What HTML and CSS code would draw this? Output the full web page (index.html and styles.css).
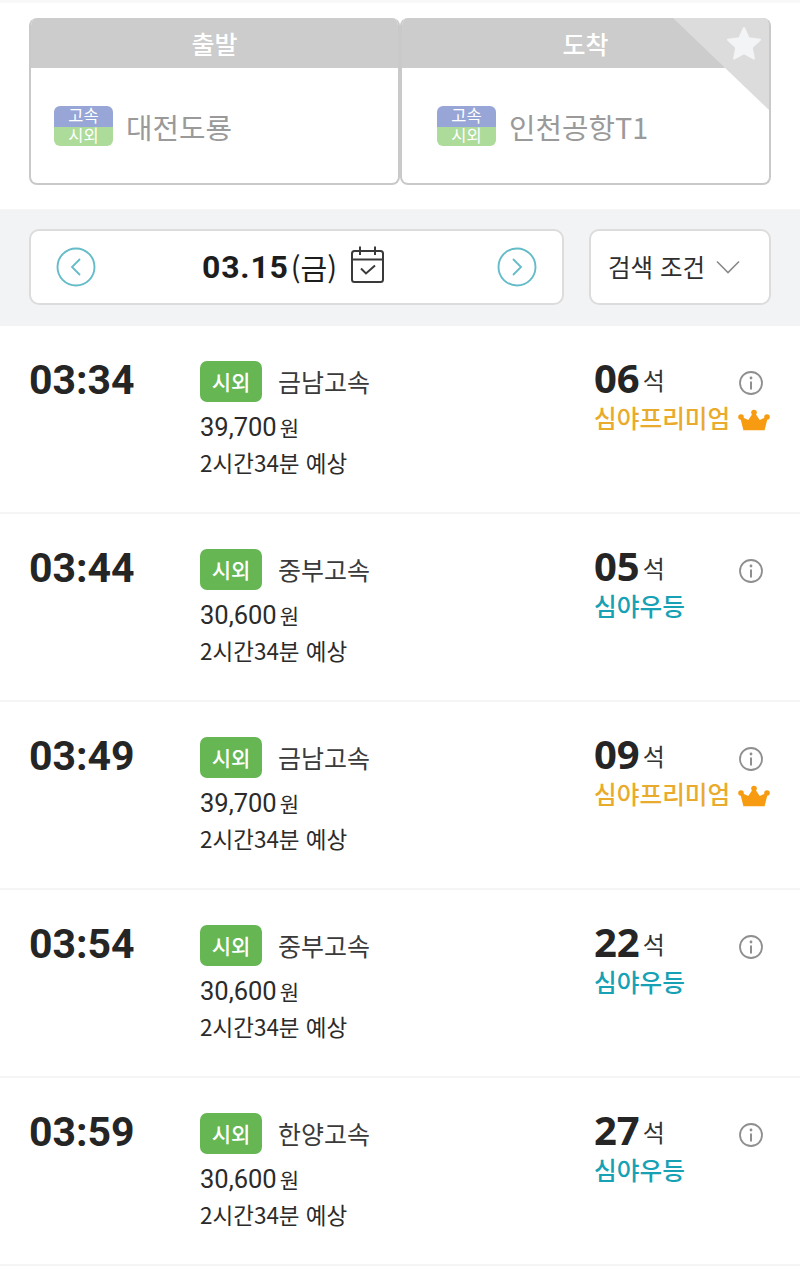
FILE: index.html
```html
<!DOCTYPE html>
<html lang="ko">
<head>
<meta charset="utf-8">
<title>배차 조회</title>
<link rel="stylesheet" href="styles.css">
</head>
<body>
<header class="route">
  <section class="end">
    <h2 class="end-title">출발</h2>
    <div class="end-body">
      <span class="kind"><span class="kind-a">고속</span><span class="kind-b">시외</span></span>
      <span class="place">대전도룡</span>
    </div>
  </section>
  <section class="end end-right">
    <h2 class="end-title">도착</h2>
    <div class="end-body">
      <span class="kind"><span class="kind-a">고속</span><span class="kind-b">시외</span></span>
      <span class="place">인천공항T1</span>
    </div>
    <svg class="fav" width="98" height="94" viewBox="0 0 98 94"><path d="M0 0H91a7 7 0 0 1 7 7V94Z" fill="#dcdcdc"/><path d="M71 10l4.800 10.300 11.200 1.400-8.300 7.700 2.200 11.100L71 35.100l-9.900 5.400 2.200-11.100-8.300-7.700 11.200-1.400Z" fill="#f3f4f6" stroke="#f3f4f6" stroke-width="2" stroke-linejoin="round"/></svg>
  </section>
</header>

<div class="bar">
  <div class="date-box">
    <svg class="arrow" width="40" height="40" viewBox="0 0 40 40"><circle cx="20" cy="20" r="18.500" fill="none" stroke="#64bcc8" stroke-width="1.900"/><path d="M24 12l-8 8 8 8" fill="none" stroke="#64bcc8" stroke-width="1.800"/></svg>
    <div class="date">
      <span class="date-num">03.15</span><span class="date-day">(금)</span>
      <svg class="cal" width="36" height="40" viewBox="0 0 36 40"><rect x="2" y="6" width="31" height="31" rx="2.500" fill="none" stroke="#3a3a3a" stroke-width="2"/><path d="M2 14.500H33M10 1.500V10M25 1.500V10" fill="none" stroke="#3a3a3a" stroke-width="2"/><path d="M11 23.500l5 5 9-8" fill="none" stroke="#3a3a3a" stroke-width="2"/></svg>
    </div>
    <svg class="arrow" width="40" height="40" viewBox="0 0 40 40"><circle cx="20" cy="20" r="18.500" fill="none" stroke="#64bcc8" stroke-width="1.900"/><path d="M16 12l8 8-8 8" fill="none" stroke="#64bcc8" stroke-width="1.800"/></svg>
  </div>
  <div class="filter">
    <span>검색 조건</span>
    <svg width="24" height="14" viewBox="0 0 24 14"><path d="M1 1.500l11 11 11-11" fill="none" stroke="#8a8a8a" stroke-width="1.600"/></svg>
  </div>
</div>

<main class="list">
  <article class="row">
    <div class="time">03:34</div>
    <div class="info">
      <div class="line-top"><span class="tag">시외</span><span class="company">금남고속</span></div>
      <div class="price"><span class="amount">39,700</span><span class="won">원</span></div>
      <div class="dur">2시간34분 예상</div>
    </div>
    <div class="side">
      <div class="seats"><span class="seat-num">06</span><span class="seat-unit">석</span>
        <svg class="info-ico" width="26" height="26" viewBox="0 0 26 26"><circle cx="13" cy="13" r="11" fill="none" stroke="#8f8f8f" stroke-width="1.800"/><circle cx="13" cy="8" r="1.400" fill="#8f8f8f"/><path d="M13 11.500V19.500" stroke="#8f8f8f" stroke-width="2"/></svg>
      </div>
      <div class="grade premium">심야프리미엄<svg class="crown" width="32" height="24" viewBox="0 0 32 24"><path d="M6 21.500h20l3-12-7.500 3.500L16 5l-5.500 8L3 9.500Z" fill="#f79c12" stroke="#f79c12" stroke-width="1.500" stroke-linejoin="round"/><circle cx="16" cy="4.500" r="2.800" fill="#f79c12"/><circle cx="3" cy="9" r="2.800" fill="#f79c12"/><circle cx="29" cy="9" r="2.800" fill="#f79c12"/></svg></div>
    </div>
  </article>

  <article class="row">
    <div class="time">03:44</div>
    <div class="info">
      <div class="line-top"><span class="tag">시외</span><span class="company">중부고속</span></div>
      <div class="price"><span class="amount">30,600</span><span class="won">원</span></div>
      <div class="dur">2시간34분 예상</div>
    </div>
    <div class="side">
      <div class="seats"><span class="seat-num">05</span><span class="seat-unit">석</span>
        <svg class="info-ico" width="26" height="26" viewBox="0 0 26 26"><circle cx="13" cy="13" r="11" fill="none" stroke="#8f8f8f" stroke-width="1.800"/><circle cx="13" cy="8" r="1.400" fill="#8f8f8f"/><path d="M13 11.500V19.500" stroke="#8f8f8f" stroke-width="2"/></svg>
      </div>
      <div class="grade night">심야우등</div>
    </div>
  </article>

  <article class="row">
    <div class="time">03:49</div>
    <div class="info">
      <div class="line-top"><span class="tag">시외</span><span class="company">금남고속</span></div>
      <div class="price"><span class="amount">39,700</span><span class="won">원</span></div>
      <div class="dur">2시간34분 예상</div>
    </div>
    <div class="side">
      <div class="seats"><span class="seat-num">09</span><span class="seat-unit">석</span>
        <svg class="info-ico" width="26" height="26" viewBox="0 0 26 26"><circle cx="13" cy="13" r="11" fill="none" stroke="#8f8f8f" stroke-width="1.800"/><circle cx="13" cy="8" r="1.400" fill="#8f8f8f"/><path d="M13 11.500V19.500" stroke="#8f8f8f" stroke-width="2"/></svg>
      </div>
      <div class="grade premium">심야프리미엄<svg class="crown" width="32" height="24" viewBox="0 0 32 24"><path d="M6 21.500h20l3-12-7.500 3.500L16 5l-5.500 8L3 9.500Z" fill="#f79c12" stroke="#f79c12" stroke-width="1.500" stroke-linejoin="round"/><circle cx="16" cy="4.500" r="2.800" fill="#f79c12"/><circle cx="3" cy="9" r="2.800" fill="#f79c12"/><circle cx="29" cy="9" r="2.800" fill="#f79c12"/></svg></div>
    </div>
  </article>

  <article class="row">
    <div class="time">03:54</div>
    <div class="info">
      <div class="line-top"><span class="tag">시외</span><span class="company">중부고속</span></div>
      <div class="price"><span class="amount">30,600</span><span class="won">원</span></div>
      <div class="dur">2시간34분 예상</div>
    </div>
    <div class="side">
      <div class="seats"><span class="seat-num">22</span><span class="seat-unit">석</span>
        <svg class="info-ico" width="26" height="26" viewBox="0 0 26 26"><circle cx="13" cy="13" r="11" fill="none" stroke="#8f8f8f" stroke-width="1.800"/><circle cx="13" cy="8" r="1.400" fill="#8f8f8f"/><path d="M13 11.500V19.500" stroke="#8f8f8f" stroke-width="2"/></svg>
      </div>
      <div class="grade night">심야우등</div>
    </div>
  </article>

  <article class="row">
    <div class="time">03:59</div>
    <div class="info">
      <div class="line-top"><span class="tag">시외</span><span class="company">한양고속</span></div>
      <div class="price"><span class="amount">30,600</span><span class="won">원</span></div>
      <div class="dur">2시간34분 예상</div>
    </div>
    <div class="side">
      <div class="seats"><span class="seat-num">27</span><span class="seat-unit">석</span>
        <svg class="info-ico" width="26" height="26" viewBox="0 0 26 26"><circle cx="13" cy="13" r="11" fill="none" stroke="#8f8f8f" stroke-width="1.800"/><circle cx="13" cy="8" r="1.400" fill="#8f8f8f"/><path d="M13 11.500V19.500" stroke="#8f8f8f" stroke-width="2"/></svg>
      </div>
      <div class="grade night">심야우등</div>
    </div>
  </article>
</main>
</body>
</html>
```

FILE: styles.css
```css
* { box-sizing: border-box; }
html, body { margin: 0; padding: 0; }
body {
  width: 800px;
  height: 1270px;
  overflow: hidden;
  background: #fff;
  font-family: Roboto, "Noto Sans CJK KR", sans-serif;
  color: #2b2b2b;
}
.route {
  display: flex;
  height: 210px;
  padding: 15px 29px 25px;
  border-top: 3px solid #f8f8f8;
  border-bottom: 1px solid #f5f5f5;
}
.end {
  position: relative;
  width: 371px;
  height: 167px;
  border: 2px solid #c9c9c9;
  border-top: 0;
  border-radius: 8px;
  overflow: hidden;
  background: #fff;
}
.end-title {
  margin: 0 -2px;
  height: 50px;
  background: #ccc;
  color: #fff;
  font: 500 25px/50px "Noto Sans CJK KR", sans-serif;
  text-align: center;
}
.end-body {
  display: flex;
  align-items: flex-start;
  gap: 13px;
  padding: 38px 0 0 23px;
}
.end-right .end-body { padding-left: 35px; }
.kind {
  display: flex;
  flex-direction: column;
  width: 59px;
  height: 40px;
  border-radius: 6px;
  overflow: hidden;
  color: #fff;
  font: 400 16.500px/19px Roboto, "Noto Sans CJK KR", sans-serif;
  text-align: center;
}
.kind-a { height: 21px; padding-top: 1px; background: #97a6d6; }
.kind-b { height: 19px; background: #addb9a; }
.place {
  margin-top: 1px;
  color: #9a9a9a;
  font: 400 28.800px/40px "Noto Sans CJK KR", sans-serif;
}
.fav { position: absolute; top: 0; right: -2px; }
.bar {
  display: flex;
  justify-content: space-between;
  height: 116px;
  padding: 19px 29px 21px;
  background: #f2f3f5;
}
.date-box, .filter {
  display: flex;
  align-items: center;
  height: 76px;
  background: #fff;
  border: 2px solid #dcdcdc;
  border-radius: 10px;
}
.date-box {
  width: 535px;
  justify-content: space-between;
  padding: 0 25px;
}
.date {
  display: flex;
  align-items: center;
  margin-right: 5px;
  color: #1d1d1d;
}
.date-num { font: 700 32px/40px Roboto, sans-serif; letter-spacing: .8px; }
.date-day { margin-left: 2px; font: 400 29px/40px "Noto Sans CJK KR", sans-serif; }
.cal { margin: -4px 0 0 13px; }
.filter {
  width: 182px;
  gap: 11px;
  padding-left: 17px;
  font: 400 24.500px/36px "Noto Sans CJK KR", sans-serif;
  color: #2e2e2e;
}
.row {
  display: flex;
  height: 188px;
  padding: 28px 29px 0;
  border-bottom: 2px solid #f5f5f5;
}
.time {
  width: 171px;
  margin-top: 2px;
  color: #252525;
  font: 700 41px/48px Roboto, sans-serif;
}
.info { width: 394px; padding-top: 7px; }
.line-top { display: flex; align-items: center; gap: 16px; }
.tag {
  width: 62px;
  height: 41px;
  border-radius: 7px;
  background: #66b653;
  color: #fff;
  font: 500 21px/41px "Noto Sans CJK KR", sans-serif;
  text-align: center;
}
.company { font: 400 25px/41px "Noto Sans CJK KR", sans-serif; color: #3a3a3a; }
.price {
  display: flex;
  align-items: center;
  gap: 3px;
  height: 36px;
  margin-top: 7px;
}
.amount { font: 400 25.500px/36px Roboto, sans-serif; }
.won { font: 400 21px/36px "Noto Sans CJK KR", sans-serif; }
.dur { margin-top: -1px; font: 400 22.500px/36px "Noto Sans CJK KR", sans-serif; }
.side { width: 177px; }
.seats { display: flex; align-items: center; height: 48px; }
.seat-num { font: 700 40px/48px "Open Sans", Roboto, sans-serif; color: #252525; }
.seat-unit { margin: 7px 0 0 3px; font: 400 24px/48px Roboto, "Noto Sans CJK KR", sans-serif; color: #333; }
.info-ico { margin: 10px 7px 0 auto; }
.grade {
  display: flex;
  align-items: center;
  gap: 8px;
  height: 36px;
  white-space: nowrap;
  font: 500 24.700px/36px Roboto, "Noto Sans CJK KR", sans-serif;
}
.crown { flex: none; }
.premium { color: #e9ab2c; }
.night { color: #17a1b4; }
```
